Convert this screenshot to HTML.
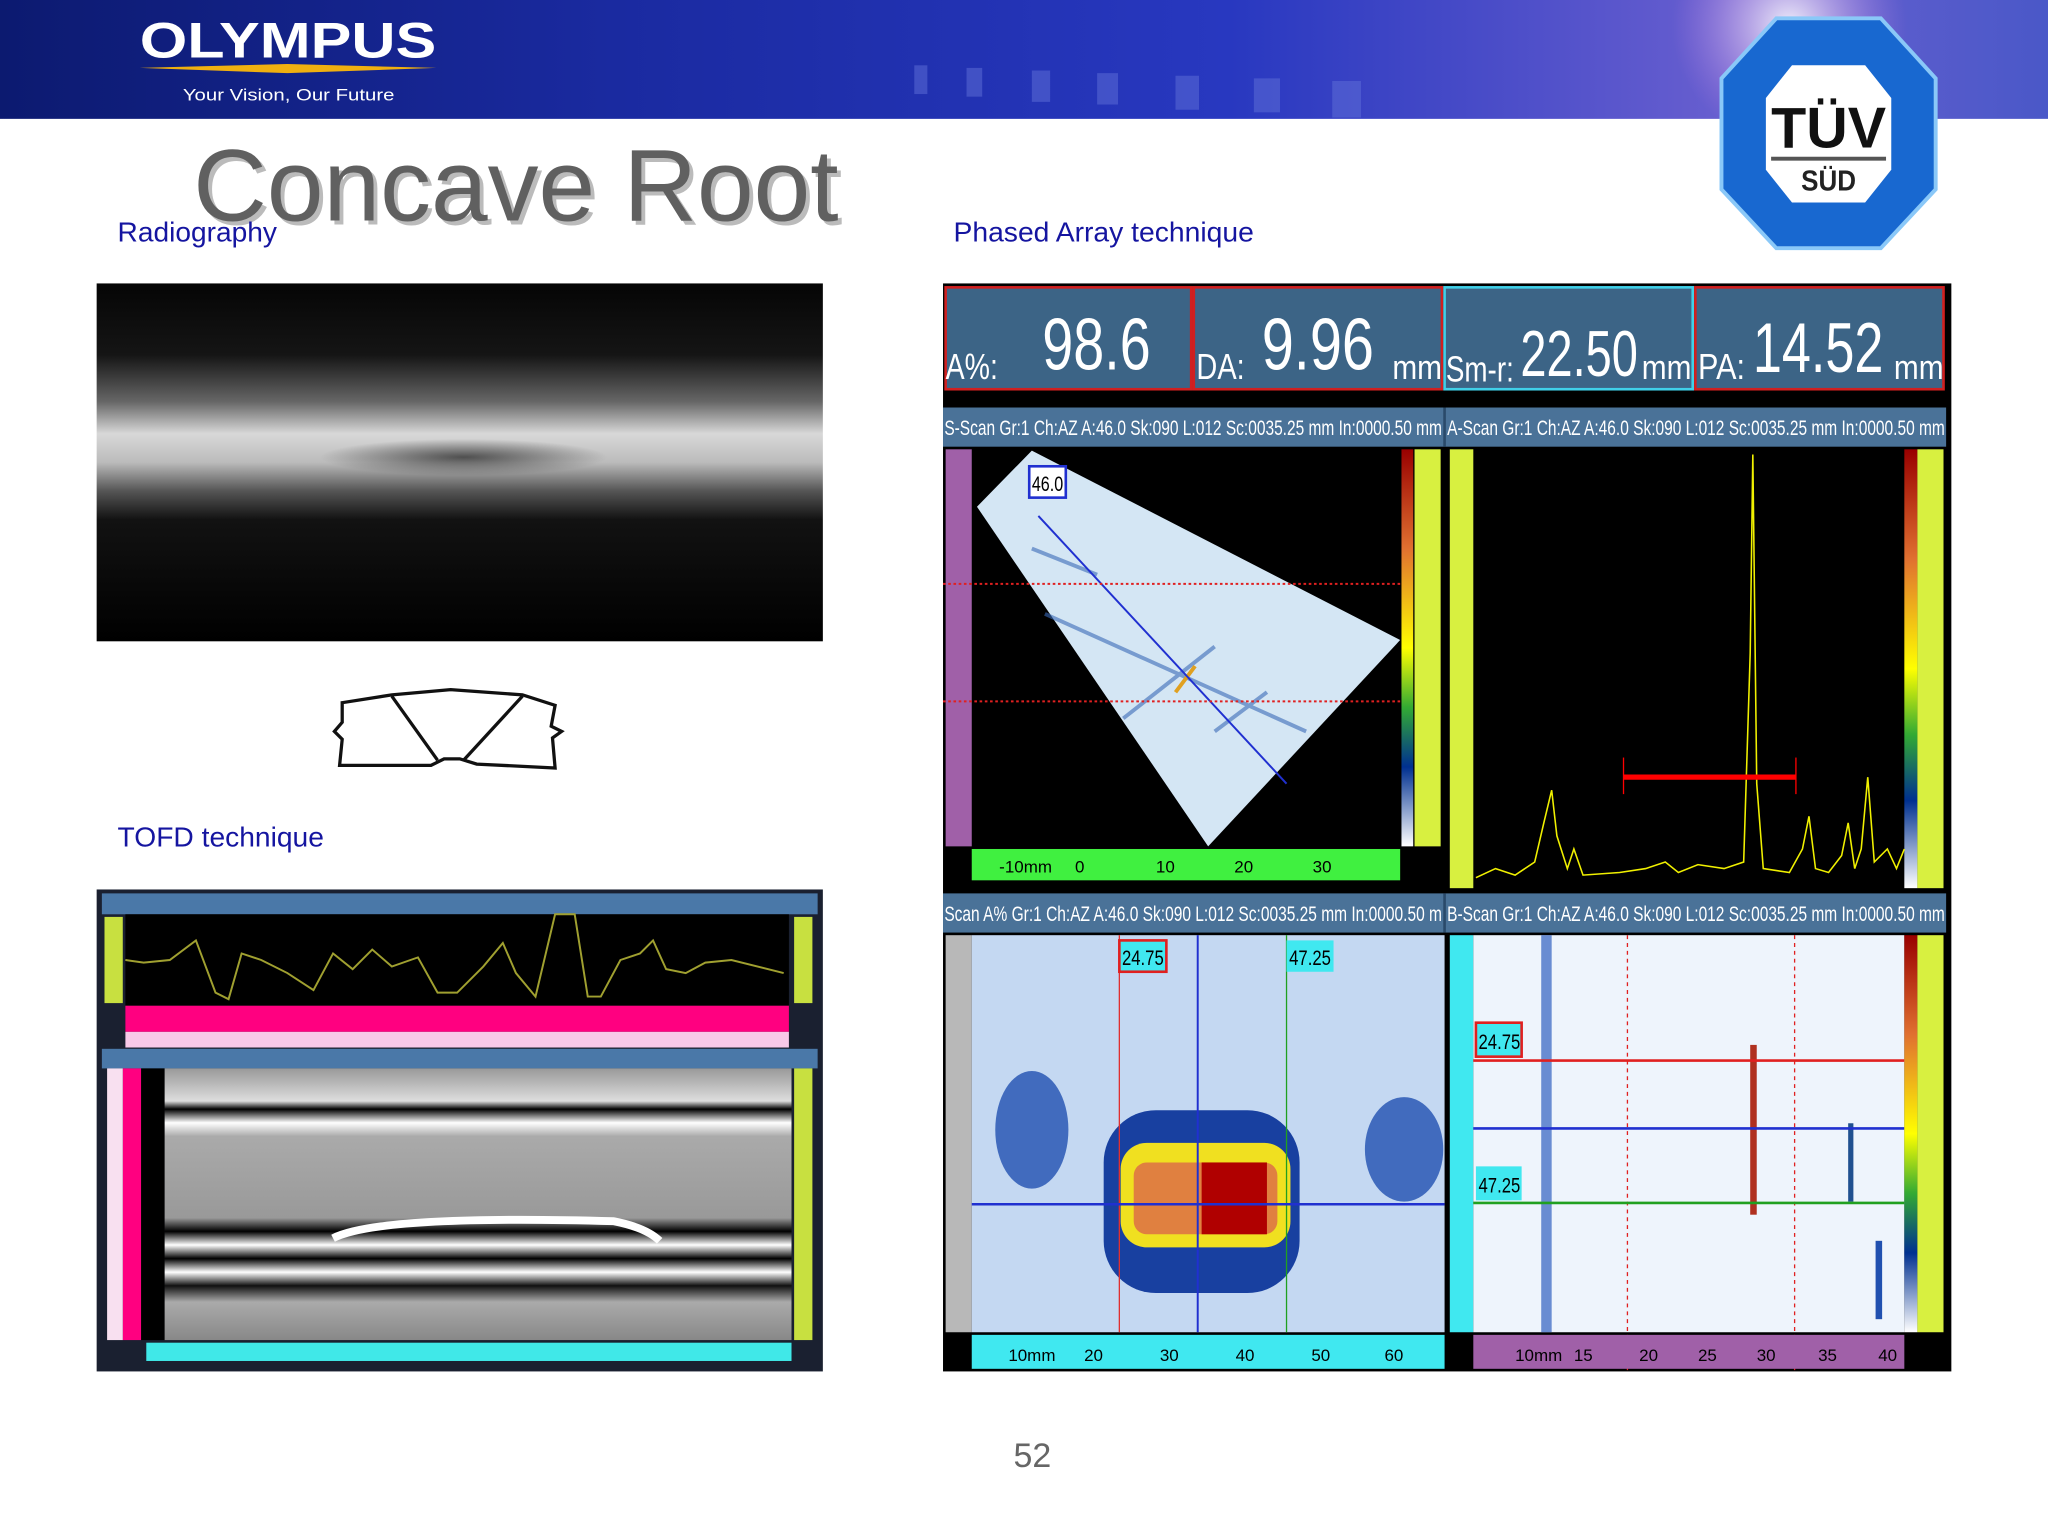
<!DOCTYPE html>
<html><head><meta charset="utf-8"><style>html,body{margin:0;padding:0;background:#fff}svg{display:block}</style></head>
<body>
<svg width="2048" height="1536" viewBox="0 0 1568 1176" preserveAspectRatio="none" xmlns="http://www.w3.org/2000/svg" font-family="Liberation Sans, sans-serif">
<defs>
<linearGradient id="hdr" x1="0" y1="0" x2="1" y2="0">
<stop offset="0" stop-color="#0c1a70"/><stop offset="0.3" stop-color="#1a2aa0"/><stop offset="0.6" stop-color="#2838c0"/><stop offset="0.85" stop-color="#6a60d0"/><stop offset="1" stop-color="#4a58c8"/></linearGradient>
<radialGradient id="glow" cx="0.5" cy="0.5" r="0.5"><stop offset="0" stop-color="#fff" stop-opacity="0.9"/><stop offset="1" stop-color="#c080e0" stop-opacity="0"/></radialGradient>
<linearGradient id="rad" x1="0" y1="0" x2="0" y2="1">
<stop offset="0" stop-color="#050505"/><stop offset="0.2" stop-color="#151515"/><stop offset="0.33" stop-color="#666"/><stop offset="0.42" stop-color="#d8d8d8"/><stop offset="0.5" stop-color="#bbb"/><stop offset="0.58" stop-color="#555"/><stop offset="0.66" stop-color="#121212"/><stop offset="1" stop-color="#000"/></linearGradient>
<radialGradient id="dk" cx="0.5" cy="0.5" r="0.5"><stop offset="0" stop-color="#333" stop-opacity="0.8"/><stop offset="1" stop-color="#333" stop-opacity="0"/></radialGradient>
<linearGradient id="cbar" x1="0" y1="0" x2="0" y2="1">
<stop offset="0" stop-color="#900"/><stop offset="0.25" stop-color="#e07030"/><stop offset="0.5" stop-color="#ff0"/><stop offset="0.65" stop-color="#3a3"/><stop offset="0.8" stop-color="#003090"/><stop offset="1" stop-color="#fff"/></linearGradient>
<linearGradient id="tofdb" x1="0" y1="0" x2="0" y2="1">
<stop offset="0" stop-color="#999"/><stop offset="0.12" stop-color="#ddd"/><stop offset="0.15" stop-color="#000"/><stop offset="0.2" stop-color="#fff"/><stop offset="0.25" stop-color="#aaa"/><stop offset="0.55" stop-color="#999"/><stop offset="0.6" stop-color="#000"/><stop offset="0.65" stop-color="#fff"/><stop offset="0.7" stop-color="#000"/><stop offset="0.75" stop-color="#fff"/><stop offset="0.8" stop-color="#111"/><stop offset="0.86" stop-color="#aaa"/><stop offset="1" stop-color="#888"/></linearGradient>
</defs>
<rect width="1568" height="1176" fill="#fff"/>
<rect x="0" y="0" width="1568" height="91" fill="url(#hdr)"/>
<circle cx="1370" cy="20" r="90" fill="url(#glow)"/>
<g fill="#6070d8" opacity="0.5"><rect x="700" y="50" width="10" height="22"/><rect x="740" y="52" width="12" height="22"/><rect x="790" y="54" width="14" height="24"/><rect x="840" y="56" width="16" height="24"/><rect x="900" y="58" width="18" height="26"/><rect x="960" y="60" width="20" height="26"/><rect x="1020" y="62" width="22" height="28"/></g>
<text x="107" y="44" fill="#fff" font-size="38" font-weight="bold" textLength="227" lengthAdjust="spacingAndGlyphs">OLYMPUS</text>
<path d="M107 52 L220 49 L334 52 L220 56 Z" fill="#f0b010"/>
<text x="140" y="77" fill="#fff" font-size="13" textLength="162" lengthAdjust="spacingAndGlyphs">Your Vision, Our Future</text>
<polygon points="1360,14 1440,14 1482,60 1482,145 1440,190 1360,190 1318,145 1318,60" fill="#1868d0" stroke="#8ac8f8" stroke-width="3"/>
<polygon points="1372,50 1428,50 1448,75 1448,130 1428,155 1372,155 1352,130 1352,75" fill="#fff"/>
<text x="1400" y="113" text-anchor="middle" font-size="44" font-weight="bold" fill="#111" textLength="88" lengthAdjust="spacingAndGlyphs">TÜV</text>
<rect x="1356" y="120" width="88" height="3" fill="#555"/>
<text x="1400" y="146" text-anchor="middle" font-size="22" font-weight="bold" fill="#222" textLength="42" lengthAdjust="spacingAndGlyphs">SÜD</text>
<text x="151" y="172" font-size="78" fill="#bbb" textLength="494" lengthAdjust="spacingAndGlyphs">Concave Root</text>
<text x="148" y="169" font-size="78" fill="#606060" textLength="494" lengthAdjust="spacingAndGlyphs">Concave Root</text>
<text x="90" y="185" font-size="21" fill="#1515a0" textLength="122" lengthAdjust="spacingAndGlyphs">Radiography</text>
<text x="730" y="185" font-size="21" fill="#1515a0" textLength="230" lengthAdjust="spacingAndGlyphs">Phased Array technique</text>
<text x="90" y="648" font-size="21" fill="#1515a0" textLength="158" lengthAdjust="spacingAndGlyphs">TOFD technique</text>
<text x="776" y="1123" font-size="26" fill="#666">52</text>
<rect x="74" y="217" width="556" height="274" fill="url(#rad)"/>
<ellipse cx="355" cy="350" rx="110" ry="14" fill="url(#dk)"/>
<g fill="none" stroke="#111" stroke-width="2.5">
<path d="M262 538 L300 532 L345 528 L400 532 L425 540 L422 556 L430 560 L423 565 L425 588 L365 585 L352 581 L340 581 L330 586 L260 586 L262 566 L256 560 L262 553 Z"/>
<path d="M300 533 L335 582 M400 533 L355 582"/></g>
<rect x="74" y="681" width="556" height="369" fill="#1a2030"/>
<rect x="78" y="684" width="548" height="16" fill="#4a78a8"/>
<rect x="96" y="700" width="508" height="70" fill="#000"/>
<rect x="80" y="702" width="14" height="66" fill="#c8e040"/><rect x="608" y="702" width="14" height="66" fill="#c8e040"/>
<polyline fill="none" stroke="#a0a030" stroke-width="1.5" points="96,735 110,737 130,735 150,720 165,760 175,765 185,730 200,735 220,745 240,758 255,730 270,742 285,727 300,740 320,733 335,760 350,760 370,740 385,722 395,745 410,763 425,700 440,700 450,763 460,763 475,735 490,730 500,720 510,742 525,745 540,737 560,735 600,745"/>
<rect x="96" y="770" width="508" height="20" fill="#ff0080"/>
<rect x="96" y="790" width="508" height="12" fill="#f8c8e8"/>
<rect x="78" y="803" width="548" height="15" fill="#4a78a8"/>
<rect x="126" y="818" width="480" height="208" fill="url(#tofdb)"/>
<path d="M255 948 Q290 930 470 935 Q495 940 505 950" stroke="#fff" stroke-width="6" fill="none"/>
<rect x="108" y="818" width="18" height="208" fill="#000"/>
<rect x="94" y="818" width="14" height="208" fill="#ff0080"/><rect x="82" y="818" width="12" height="208" fill="#f8e0f0"/>
<rect x="608" y="818" width="14" height="208" fill="#c8e040"/>
<rect x="112" y="1028" width="494" height="14" fill="#40e8e8"/>
<rect x="722" y="217" width="772" height="833" fill="#000"/>
<g fill="#3c6486" stroke-width="2">
<rect x="724" y="220" width="188" height="78" stroke="#d02020"/>
<rect x="914" y="220" width="190" height="78" stroke="#d02020"/>
<rect x="1106" y="220" width="190" height="78" stroke="#40d0e8"/>
<rect x="1298" y="220" width="190" height="78" stroke="#d02020"/></g>
<g fill="#fff">
<text x="724" y="290" font-size="28" textLength="40" lengthAdjust="spacingAndGlyphs">A%:</text>
<text x="798" y="283" font-size="56" textLength="83" lengthAdjust="spacingAndGlyphs">98.6</text>
<text x="916" y="290" font-size="28" textLength="37" lengthAdjust="spacingAndGlyphs">DA:</text>
<text x="966" y="283" font-size="56" textLength="86" lengthAdjust="spacingAndGlyphs">9.96</text>
<text x="1066" y="290" font-size="26" textLength="38" lengthAdjust="spacingAndGlyphs">mm</text>
<text x="1107" y="292" font-size="28" textLength="52" lengthAdjust="spacingAndGlyphs">Sm-r:</text>
<text x="1164" y="288" font-size="50" textLength="90" lengthAdjust="spacingAndGlyphs">22.50</text>
<text x="1257" y="290" font-size="26" textLength="38" lengthAdjust="spacingAndGlyphs">mm</text>
<text x="1300" y="290" font-size="28" textLength="36" lengthAdjust="spacingAndGlyphs">PA:</text>
<text x="1342" y="285" font-size="54" textLength="100" lengthAdjust="spacingAndGlyphs">14.52</text>
<text x="1450" y="290" font-size="26" textLength="38" lengthAdjust="spacingAndGlyphs">mm</text></g>
<rect x="722" y="312" width="768" height="30" fill="#4a7298"/>
<rect x="1105" y="312" width="2" height="30" fill="#2a4a6a"/>
<g fill="#fff" font-size="16">
<text x="723" y="333" textLength="381" lengthAdjust="spacingAndGlyphs">S-Scan Gr:1 Ch:AZ A:46.0 Sk:090 L:012 Sc:0035.25 mm In:0000.50 mm</text>
<text x="1108" y="333" textLength="381" lengthAdjust="spacingAndGlyphs">A-Scan Gr:1 Ch:AZ A:46.0 Sk:090 L:012 Sc:0035.25 mm In:0000.50 mm</text></g>
<rect x="724" y="344" width="20" height="304" fill="#a060a8"/>
<polygon points="748,388 790,345 1072,490 925,648" fill="#d4e6f4"/>
<g stroke="#3a6ab8" stroke-width="3" opacity="0.6"><line x1="790" y1="420" x2="840" y2="440"/><line x1="860" y1="550" x2="930" y2="495"/><line x1="930" y1="560" x2="970" y2="530"/><line x1="800" y1="470" x2="1000" y2="560"/></g>
<line x1="900" y1="530" x2="915" y2="510" stroke="#e0a020" stroke-width="3"/>
<line x1="795" y1="395" x2="985" y2="600" stroke="#2030d0" stroke-width="1.5"/>
<rect x="788" y="357" width="28" height="24" fill="#fff" stroke="#2030d0" stroke-width="2"/>
<text x="790" y="376" font-size="16" fill="#000" textLength="24" lengthAdjust="spacingAndGlyphs">46.0</text>
<g stroke="#e02020" stroke-width="1.5" stroke-dasharray="2,2"><line x1="722" y1="447" x2="1072" y2="447"/><line x1="722" y1="537" x2="1072" y2="537"/></g>
<rect x="1073" y="344" width="9" height="304" fill="url(#cbar)"/>
<rect x="1083" y="344" width="20" height="304" fill="#d8f040"/>
<rect x="744" y="650" width="328" height="24" fill="#40f040"/>
<g fill="#000" font-size="13"><text x="765" y="668">-10mm</text><text x="823" y="668">0</text><text x="885" y="668">10</text><text x="945" y="668">20</text><text x="1005" y="668">30</text></g>
<rect x="1110" y="344" width="18" height="336" fill="#d8f040"/>
<rect x="1458" y="344" width="10" height="336" fill="url(#cbar)"/>
<rect x="1468" y="344" width="20" height="336" fill="#d8f040"/>
<polyline fill="none" stroke="#f0f000" stroke-width="1.2" points="1130,672 1145,665 1160,670 1175,660 1182,630 1188,605 1192,640 1200,665 1205,650 1212,670 1240,668 1260,665 1275,660 1285,668 1300,662 1320,665 1335,660 1340,500 1342,348 1345,600 1350,665 1370,668 1380,650 1385,625 1390,665 1400,668 1410,655 1415,630 1420,665 1425,650 1430,595 1435,660 1445,650 1452,665 1458,650"/>
<line x1="1243" y1="595" x2="1375" y2="595" stroke="#f00" stroke-width="4"/>
<line x1="1243" y1="580" x2="1243" y2="608" stroke="#f00" stroke-width="1"/><line x1="1375" y1="580" x2="1375" y2="608" stroke="#f00" stroke-width="1"/>
<rect x="722" y="684" width="768" height="30" fill="#4a7298"/>
<rect x="1105" y="684" width="2" height="30" fill="#2a4a6a"/>
<g fill="#fff" font-size="16">
<text x="723" y="705" textLength="381" lengthAdjust="spacingAndGlyphs">Scan A% Gr:1 Ch:AZ A:46.0 Sk:090 L:012 Sc:0035.25 mm In:0000.50 m</text>
<text x="1108" y="705" textLength="381" lengthAdjust="spacingAndGlyphs">B-Scan Gr:1 Ch:AZ A:46.0 Sk:090 L:012 Sc:0035.25 mm In:0000.50 mm</text></g>
<rect x="724" y="716" width="20" height="304" fill="#b8b8b8"/>
<rect x="744" y="716" width="362" height="304" fill="#c4d8f2"/>
<ellipse cx="790" cy="865" rx="28" ry="45" fill="#2050b0" opacity="0.8"/>
<ellipse cx="1075" cy="880" rx="30" ry="40" fill="#2050b0" opacity="0.8"/>
<rect x="845" y="850" width="150" height="140" rx="40" fill="#1840a0"/>
<rect x="858" y="875" width="130" height="80" rx="20" fill="#f0e020"/>
<rect x="868" y="890" width="110" height="55" rx="10" fill="#e08040"/>
<rect x="920" y="890" width="50" height="55" fill="#b00000"/>
<line x1="857" y1="716" x2="857" y2="1020" stroke="#e03030" stroke-width="1"/>
<line x1="917" y1="716" x2="917" y2="1020" stroke="#2030d0" stroke-width="1.5"/>
<line x1="985" y1="716" x2="985" y2="1020" stroke="#20a020" stroke-width="1"/>
<line x1="744" y1="922" x2="1106" y2="922" stroke="#2030d0" stroke-width="2"/>
<rect x="857" y="720" width="36" height="24" fill="#40e8f0" stroke="#e02020" stroke-width="2"/>
<text x="859" y="739" font-size="16" textLength="32" lengthAdjust="spacingAndGlyphs">24.75</text>
<rect x="985" y="720" width="36" height="24" fill="#40e8f0"/>
<text x="987" y="739" font-size="16" textLength="32" lengthAdjust="spacingAndGlyphs">47.25</text>
<rect x="744" y="1022" width="362" height="26" fill="#40e8f0"/>
<g fill="#000" font-size="13"><text x="772" y="1042">10mm</text><text x="830" y="1042">20</text><text x="888" y="1042">30</text><text x="946" y="1042">40</text><text x="1004" y="1042">50</text><text x="1060" y="1042">60</text></g>
<rect x="1110" y="716" width="18" height="304" fill="#40e8f0"/>
<rect x="1128" y="716" width="330" height="304" fill="#eef4fc"/>
<rect x="1180" y="716" width="8" height="304" fill="#3060c0" opacity="0.7"/>
<rect x="1340" y="800" width="5" height="130" fill="#b03020"/>
<rect x="1415" y="860" width="4" height="60" fill="#205090"/>
<rect x="1436" y="950" width="5" height="60" fill="#2050b0"/>
<g stroke="#e02020" stroke-dasharray="3,3" stroke-width="1"><line x1="1246" y1="716" x2="1246" y2="1050"/><line x1="1374" y1="716" x2="1374" y2="1050"/></g>
<line x1="1128" y1="812" x2="1458" y2="812" stroke="#e02020" stroke-width="2"/>
<line x1="1128" y1="864" x2="1458" y2="864" stroke="#2030d0" stroke-width="2"/>
<line x1="1128" y1="921" x2="1458" y2="921" stroke="#20a020" stroke-width="2"/>
<rect x="1130" y="783" width="35" height="26" fill="#40e8f0" stroke="#e02020" stroke-width="2"/>
<text x="1132" y="803" font-size="16" textLength="32" lengthAdjust="spacingAndGlyphs">24.75</text>
<rect x="1130" y="893" width="35" height="26" fill="#40e8f0"/>
<text x="1132" y="913" font-size="16" textLength="32" lengthAdjust="spacingAndGlyphs">47.25</text>
<rect x="1458" y="716" width="10" height="304" fill="url(#cbar)"/>
<rect x="1468" y="716" width="20" height="304" fill="#d8f040"/>
<rect x="1128" y="1022" width="330" height="26" fill="#a060a8"/>
<g fill="#000" font-size="13"><text x="1160" y="1042">10mm</text><text x="1205" y="1042">15</text><text x="1255" y="1042">20</text><text x="1300" y="1042">25</text><text x="1345" y="1042">30</text><text x="1392" y="1042">35</text><text x="1438" y="1042">40</text></g>
</svg>
</body></html>
